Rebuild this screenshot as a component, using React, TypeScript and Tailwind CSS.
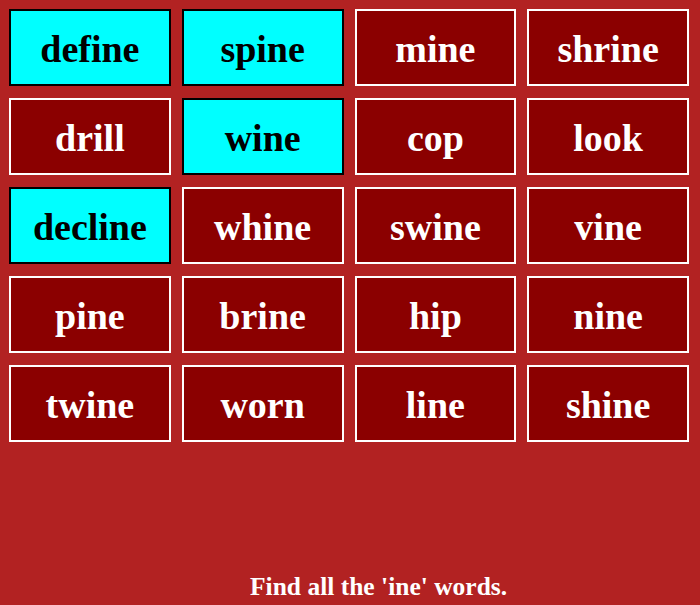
import React from 'react';

type Tile = { word: string; found: boolean };

const tiles: Tile[] = [
  { word: 'define', found: true },
  { word: 'spine', found: true },
  { word: 'mine', found: false },
  { word: 'shrine', found: false },
  { word: 'drill', found: false },
  { word: 'wine', found: true },
  { word: 'cop', found: false },
  { word: 'look', found: false },
  { word: 'decline', found: true },
  { word: 'whine', found: false },
  { word: 'swine', found: false },
  { word: 'vine', found: false },
  { word: 'pine', found: false },
  { word: 'brine', found: false },
  { word: 'hip', found: false },
  { word: 'nine', found: false },
  { word: 'twine', found: false },
  { word: 'worn', found: false },
  { word: 'line', found: false },
  { word: 'shine', found: false },
];

function App() {
  return (
    <div className="h-[605px] w-[700px] bg-[#b22222] flex flex-col font-['Liberation_Serif',serif] overflow-hidden">
      {/* Word grid */}
      <div className="grid grid-cols-4 gap-x-[11px] gap-y-[12px] w-[689px] pl-[9px] pt-[9px]">
        {tiles.map((t) => (
          <div
            key={t.word}
            className={
              t.found
                ? 'h-[77px] flex items-center justify-center border-2 border-black bg-[#00ffff] text-black'
                : 'h-[77px] flex items-center justify-center border-2 border-white bg-[#8b0000] text-white'
            }
          >
            <span className="text-[38px] font-bold leading-none pt-[2px]">{t.word}</span>
          </div>
        ))}
      </div>

      {/* Instruction */}
      <div className="mt-auto pb-[6px] pl-[250px] text-white font-bold text-[25.5px] leading-none">
        Find all the 'ine' words.
      </div>
    </div>
  );
}

export default App;
